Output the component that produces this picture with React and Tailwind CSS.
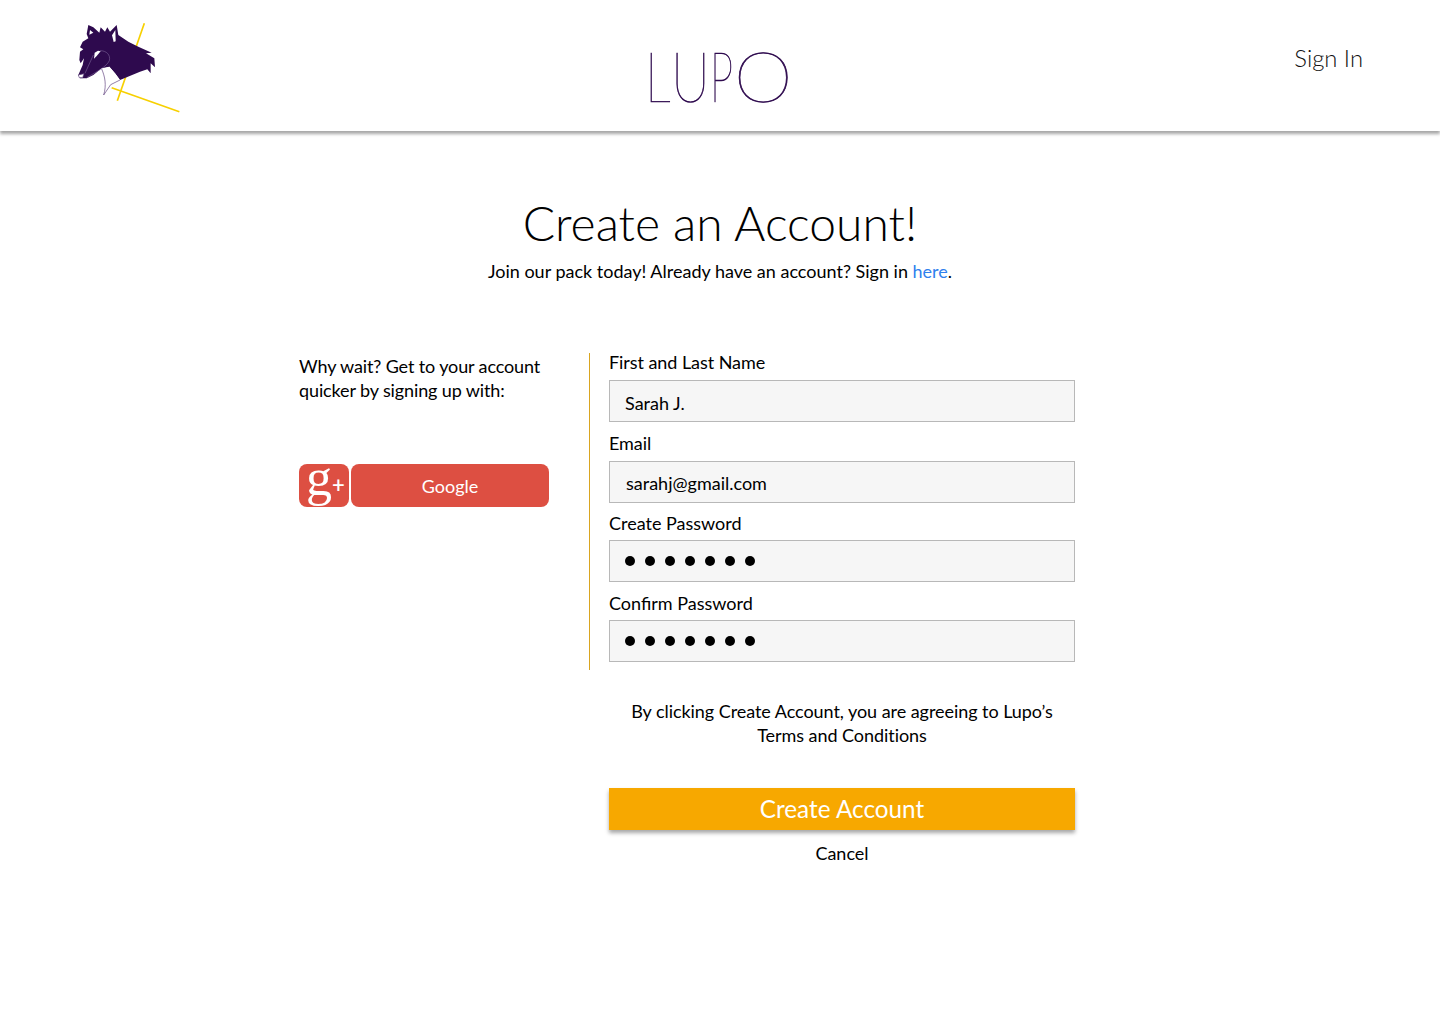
function WolfLogo() {
  // drawn in a 3x coordinate space
  return (
    <svg width="140" height="120" viewBox="0 0 420 360" className="block">
      <path d="M253 40 L172 272" stroke="#f7d000" strokeWidth="5" fill="none" />
      <path d="M155 233 L358 305" stroke="#f7d000" strokeWidth="5" fill="none" />
      <path
        d="M80 72 L85 45 L100 52 L118 68 L122 52 L135 65 L142 52 L150 65 L170 45 L175 75 L205 95 L235 110 L275 128 L258 130 L283 145 L285 172 L272 160 L272 190 L262 178 L240 185 L180 210 L165 190 L148 170 L125 175 L100 195 L80 205 L60 205 L55 195 L68 165 L72 145 L62 160 L58 150 L60 125 L70 118 L60 112 L68 95 L85 85 Z"
        fill="#2e0a4e"
      />
      <path d="M125 177 L148 170 L165 190 L180 210 L152 224 L131 255 C140 225 135 200 125 177 Z" fill="#ffffff" />
      <path d="M125 177 C135 200 140 225 131 255 L152 224 L180 210" stroke="#5d3f7d" strokeWidth="2" fill="none" />
      <path d="M156 76 L166 60 L167 94 L161 96 Z" fill="#ffffff" />
      <path d="M90 60 L88 74 L100 68 Z" fill="#ffffff" />
      <path d="M104 128 L114 122 L122 124 L110 138 L102 146 Z" fill="#ffffff" />
      <path d="M55 195 L72 191 L68 203 L58 203 Z" fill="#ffffff" stroke="#5d3f7d" strokeWidth="2" />
      <path d="M75 190 L100 135 M120 122 C140 122 152 135 148 152 C140 170 110 185 80 203" stroke="#8d76a8" strokeWidth="1.5" fill="none" />
    </svg>
  )
}

function Field({ label, value, inputClass, valueClass, labelClass }) {
  return (
    <div>
      <div className={`text-[18px] leading-[24px] text-black tracking-[-0.06px] ${labelClass}`}>{label}</div>
      <div className={`h-[42px] border border-[#b8b8b8] bg-[#f6f6f6] flex items-center text-[18px] text-black ${inputClass}`}>
        <span className={valueClass}>{value}</span>
      </div>
    </div>
  )
}

function PasswordField({ label, labelClass }) {
  return (
    <div>
      <div className={`text-[18px] leading-[24px] text-black ${labelClass}`}>{label}</div>
      <div className="h-[42px] border border-[#b8b8b8] bg-[#f6f6f6] flex items-center gap-[10px] pl-[15px]">
        {[0, 1, 2, 3, 4, 5, 6].map((i) => (
          <span key={i} className="w-[10px] h-[10px] rounded-full bg-black"></span>
        ))}
      </div>
    </div>
  )
}

export default function App() {
  return (
    <div className="min-h-[1024px] bg-white font-['Lato','Liberation_Sans',sans-serif] text-black">
      {/* Header */}
      <header className="h-[131px] bg-white shadow-[0_3px_3px_rgba(0,0,0,0.35)] flex justify-between items-start">
        <div className="pl-[60px] pt-[10px]">
          <WolfLogo />
        </div>
        <div className="pt-[27px] text-[#2e0a4e] font-extralight text-[71px] leading-[96px] flex mr-[60px] [-webkit-text-stroke:0.7px_#2e0a4e]">
          <span className="w-[26px] scale-x-[0.72] origin-left">L</span>
          <span className="w-[39px] scale-x-[0.76] origin-left">U</span>
          <span className="w-[24px] scale-x-[0.58] origin-left">P</span>
          <span className="scale-x-[1.05] origin-left">O</span>
        </div>
        <div className="pt-[41px] pr-[77px] text-[23.8px] leading-[34px] font-light text-[#111]">Sign In</div>
      </header>

      {/* Title */}
      <div className="text-center pt-[59px]">
        <h1 className="text-[48px] leading-[66px] font-light">Create an Account!</h1>
        <p className="text-[18px] leading-[28px] mt-[1px]">
          Join our pack today! Already have an account? Sign in <span className="text-[#2f80ed]">here</span>.
        </p>
      </div>

      {/* Form */}
      <div className="flex pl-[299px] mt-[68px]">
        <div className="w-[291px] h-[317px] border-r border-[#d9a520] pr-[40px] pt-[1px]">
          <p className="text-[18px] leading-[24px] tracking-[-0.12px]">Why wait? Get to your account quicker by signing up with:</p>
          <div className="flex gap-[2px] mt-[62px] w-[250px]">
            <div className="w-[50px] h-[43px] rounded-[8px] bg-[#dd4f42] text-white flex items-center justify-center pl-[3px]">
              <span className="font-['Liberation_Serif',serif] text-[52px] leading-[40px] mt-[-15px]">g</span>
              <span className="text-[22px] leading-[22px] font-semibold mt-[-2px]">+</span>
            </div>
            <div className="flex-1 h-[43px] rounded-[8px] bg-[#dd4f42] text-white text-[18px] flex items-center justify-center pt-[2px]">Google</div>
          </div>
        </div>
        <div className="w-[466px] ml-[19px]">
          <Field label="First and Last Name" value="Sarah J." labelClass="mb-[6px] mt-[-3px]" inputClass="pl-[15px]" valueClass="mt-[4px]" />
          <div className="mt-[9px]">
            <Field label="Email" value="sarahj@gmail.com" labelClass="mb-[6px]" inputClass="pl-[16px]" valueClass="mt-[2px]" />
          </div>
          <div className="mt-[8px]">
            <PasswordField label="Create Password" labelClass="mb-[5px]" />
          </div>
          <div className="mt-[9px]">
            <PasswordField label="Confirm Password" labelClass="mb-[5px]" />
          </div>
          <p className="text-[18px] leading-[24px] tracking-[-0.05px] text-center mt-[37px]">
            By clicking Create Account, you are agreeing to Lupo’s
            <br />
            Terms and Conditions
          </p>
          <button className="block w-full h-[42px] bg-[#f7a800] text-white text-[24.3px] pt-[1px] mt-[41px] shadow-[0_3px_4px_rgba(0,0,0,0.35)]">Create Account</button>
          <div className="text-center text-[18px] leading-[24px] mt-[11px]">Cancel</div>
        </div>
      </div>
    </div>
  )
}
